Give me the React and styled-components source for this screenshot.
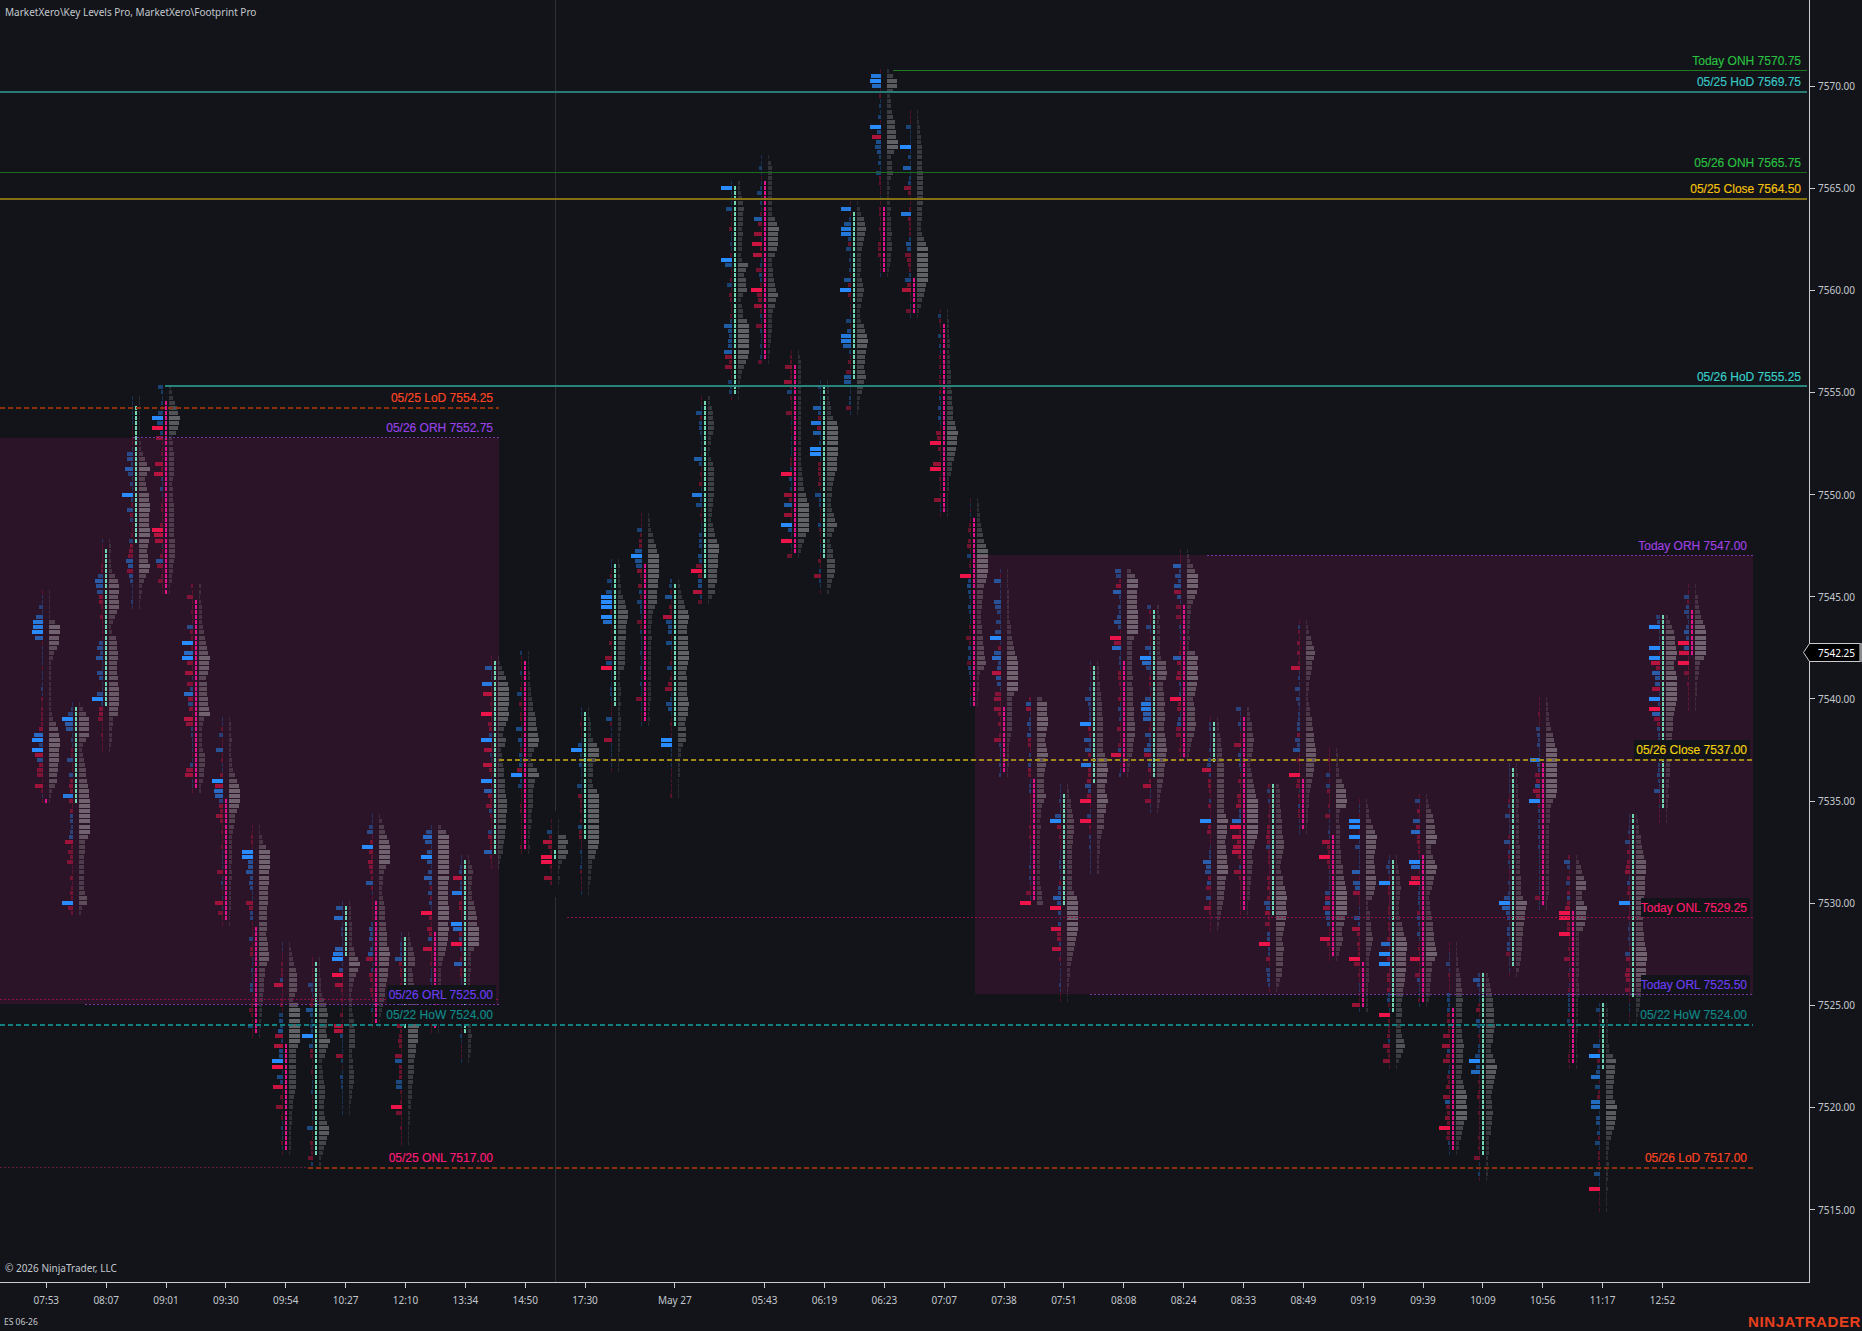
import React from "react";
import styled, { createGlobalStyle } from "styled-components";

const GlobalStyle = createGlobalStyle`
  html, body {
    margin: 0;
    padding: 0;
    background: #12141a;
  }
`;

const Page = styled.div`
  width: 1862px;
  height: 1331px;
  display: flex;
  flex-direction: column;
  overflow: hidden;
  background: #12141a;
  color: #c4c8cc;
  font-family: "Noto Sans", "Open Sans", sans-serif;
`;

const ChartRow = styled.div`
  display: flex;
  height: 1283px;
`;

const ChartPane = styled.div`
  position: relative;
  width: 1810px;
  height: 1283px;
  box-sizing: border-box;
  border-right: 1px solid #c9cbcd;
  border-bottom: 1px solid #c9cbcd;
`;

const ChartSvg = styled.svg`
  display: block;
  shape-rendering: crispEdges;
`;

const Caption = styled.div`
  position: absolute;
  left: 5px;
  top: ${(p) => p.$top}px;
  font-size: 10px;
  line-height: 14px;
  white-space: nowrap;
`;

const LevelText = styled.text`
  font-family: "Liberation Sans", Arial, sans-serif;
  font-size: 12px;
  text-anchor: end;
  dominant-baseline: central;
  fill: ${(p) => p.$color};
  stroke: ${(p) => p.$color};
  stroke-width: 0.15px;
  shape-rendering: auto;
`;

const PriceAxis = styled.div`
  position: relative;
  flex: 1;
  padding-top: 35px;
  display: flex;
  flex-direction: column;
`;

const PriceRow = styled.div`
  height: 102.15px;
  flex: none;
  display: flex;
  align-items: center;
  gap: 3px;
  font-size: 10px;
  &::before {
    content: "";
    width: 5px;
    height: 1px;
    background: #c9cbcd;
  }
`;

const LastPrice = styled.div`
  position: absolute;
  left: -7px;
  top: 643px;
  width: 59px;
  height: 19px;
  display: flex;
  align-items: center;
  justify-content: flex-end;
  padding-right: 7px;
  box-sizing: border-box;
  font-size: 10px;
  color: #fff;
  & > svg {
    position: absolute;
    left: 0;
    top: 0;
  }
  & > span {
    position: relative;
  }
`;

const TimeAxis = styled.div`
  display: flex;
  height: 28px;
  padding-left: 16.4px;
`;

const TimeTick = styled.div`
  flex: none;
  width: 59.86px;
  margin-left: ${(p) => (p.$skip ? 29.93 : 0)}px;
  display: flex;
  flex-direction: column;
  align-items: center;
  gap: 5px;
  font-size: 10px;
  line-height: 14px;
  &::before {
    content: "";
    width: 1px;
    height: 5px;
    background: #c9cbcd;
  }
`;

const Footer = styled.div`
  height: 20px;
  display: flex;
  align-items: center;
  justify-content: space-between;
  padding: 0 1px 0 4px;
`;

const Instrument = styled.span`
  font-size: 8.5px;
`;

const Brand = styled.span`
  font-family: "Liberation Sans", Arial, sans-serif;
  font-weight: 700;
  font-size: 15px;
  letter-spacing: 0.6px;
  color: #e8401c;
`;

const X0 = 46.3;
const COL = 29.93;
const Y0 = 86;
const ROW = 5.107;
const BLUE = "rgb(40,140,255)";
const RED = "rgb(236,20,72)";

const PRICES = ["7570.00", "7565.00", "7560.00", "7555.00", "7550.00", "7545.00", "7540.00", "7535.00", "7530.00", "7525.00", "7520.00", "7515.00"];

const TIMES = [
  ["07:53"], ["08:07"], ["09:01"], ["09:30"], ["09:54"], ["10:27"], ["12:10"], ["13:34"], ["14:50"],
  ["17:30"], ["May 27", true], ["05:43", true], ["06:19"], ["06:23"], ["07:07"], ["07:38"], ["07:51"],
  ["08:08"], ["08:24"], ["08:33"], ["08:49"], ["09:19"], ["09:39"], ["10:09"], ["10:56"], ["11:17"], ["12:52"],
];

const REGIONS = [
  { x: 0, y: 438, w: 499, h: 566 },
  { x: 975, y: 555, w: 778, h: 439 },
];

// y, x from, x to, colour, stroke, dash
const LINES = [
  [70.5, 893, 1807, "#1d7a20", 1],
  [92, 0, 1807, "#2a8078", 2],
  [172, 0, 1807, "#1b6c1e", 1],
  [199, 0, 1807, "#8a7514", 2],
  [386, 165, 1807, "#2a8a80", 2],
  [408, 0, 499, "#8c3010", 2, "5 3"],
  [437.5, 133, 499, "#7c34a4", 1, "2 2"],
  [555.5, 1207, 1753, "#7c34a4", 1, "2 2"],
  [760, 499, 1753, "#a08a14", 2, "5 3"],
  [917.5, 567, 1753, "#8c1050", 1, "2 2"],
  [994.5, 1090, 1753, "#7c34a4", 1, "2 2"],
  [999.5, 0, 499, "#8c1050", 1, "2 2"],
  [1004.5, 85, 499, "#7c34a4", 1, "2 2"],
  [1025, 0, 1753, "#11807e", 2, "5 3"],
  [1167.5, 0, 310, "#6a1a3a", 1, "2 2"],
  [1168, 308, 1753, "#8c3010", 2, "5 3"],
];

// text, right edge, centre y, colour, backing box
const LABELS = [
  ["Today ONH 7570.75", 1801, 61, "#2ac040"],
  ["05/25 HoD 7569.75", 1801, 82, "#38c8c4"],
  ["05/26 ONH 7565.75", 1801, 163, "#2ac040"],
  ["05/25 Close 7564.50", 1801, 189, "#f4c20a"],
  ["05/26 HoD 7555.25", 1801, 377, "#38d0c8"],
  ["05/25 LoD 7554.25", 493, 398, "#ff4522"],
  ["05/26 ORH 7552.75", 493, 428, "#9a42e8"],
  ["Today ORH 7547.00", 1747, 546, "#a040e0"],
  ["05/26 Close 7537.00", 1747, 750, "#f2d20e", true],
  ["Today ONL 7529.25", 1747, 908, "#ff1a6e", true],
  ["Today ORL 7525.50", 1747, 985, "#6e3cf0", true],
  ["05/26 ORL 7525.00", 493, 995, "#6e3cf0", true],
  ["05/22 HoW 7524.00", 493, 1015, "#0f8a88", true],
  ["05/22 HoW 7524.00", 1747, 1015, "#0f8a88", true],
  ["05/25 ONL 7517.00", 493, 1158, "#ff1a78"],
  ["05/26 LoD 7517.00", 1747, 1158, "#ff4522"],
];

// top, bottom, body top, body bottom, direction, right profile (y:width), strong left bars (y colour width)
const COLUMNS = [
  [594, 802, 796, 801, "d", "594:1 620:1 625:11 645:10 653:5 666:2 696:2 706:2 717:3 727:8 737:11 768:9 783:8 788:4 802:1", "606b4 617b7 622b10 627b10 632b11 637b8 733b9 739b11 743b4 749b11 754r8 759b6 770r6 775r6 785r8"],
  [706, 914, 709, 806, "u", "706:2 717:9 732:11 737:8 747:3 760:5 778:8 788:9 803:11 834:11 841:6 864:5 890:5 901:9 908:3 914:1", "712b5 719b11 724b8 729b7 758b6 794b10 842r8 850r5 860r6 901b11 907r5"],
  [543, 751, 546, 704, "u", "543:1 569:2 576:6 584:11 599:9 609:11 615:6 630:2 638:7 650:9 671:8 686:9 696:11 714:9 719:4 737:3 751:1", "575b5 580b8 585b7 591b6 650b6 657b7 672b6 692b6 697b11 706b2 719r5"],
  [400, 608, 403, 541, "u", "400:1 436:1 444:2 454:4 464:8 469:11 477:6 497:10 507:11 523:10 538:11 553:8 569:11 576:7 584:4 608:1", "452b6 460b6 468b8 475b5 495b11 509b6 520b3 541b4 555r5 560b7 570r6"],
  [385, 594, 398, 592, "d", "385:1 395:3 405:7 418:11 431:9 439:3 449:5 472:5 487:3 507:5 533:5 558:6 574:3 594:1", "386b5 411b5 417b11 423b6 428r11 438r7 463r8 473r9 529r11 535r9 540r8 560b7 568r6 580r5"],
  [584, 793, 597, 790, "d", "584:1 599:2 630:4 645:8 658:11 671:9 681:7 696:8 714:11 719:5 737:2 757:6 773:5 788:2", "595r6 626b6 643b11 652b9 657b11 662r6 673r8 681r6 693b9 702b5 718r9 723r7 768r7 774r8"],
  [717, 925, 796, 922, "d", "717:1 737:3 757:2 773:5 788:11 803:11 813:7 839:3 890:2 922:1", "733b4 748b7 779b11 784r8 790b9 795b8 800b4 815r7 871r6 902r8 912r5"],
  [829, 1035, 928, 1033, "d", "829:1 842:4 852:11 880:10 900:9 921:8 936:7 956:11 966:7 992:4 1012:3 1035:1", "851b11 856b11 871b7 902r7 937b4 1010r4 1024b5"],
  [946, 1154, 1042, 1152, "d", "946:1 961:4 974:8 992:8 1000:4 1007:11 1038:11 1053:7 1084:7 1109:3 1154:1", "983r9 1014b4 1034r8 1044r9 1060b11 1065r11 1075b6 1085r10 1106r7"],
  [961, 1164, 964, 1158, "u", "961:1 992:2 1012:9 1033:7 1040:11 1045:9 1063:3 1094:6 1114:5 1130:11 1160:2", "983b5 1009b7 1034b11 1126b6 1157r5"],
  [905, 1113, 908, 959, "u", "905:1 921:3 941:3 951:5 963:11 974:7 992:2 1012:4 1043:7 1051:3 1074:5 1113:1", "910b7 917b9 948b8 953b10 958b11 973r11 983r8 1024r9 1029r9 1055r7"],
  [817, 1025, 903, 1023, "d", "817:1 834:7 844:11 862:11 870:5 890:3 915:6 941:8 956:11 987:7 1023:1", "825b4 833b6 846b11 881b7 958r7"],
  [936, 1145, 938, 1028, "u", "936:1 961:8 971:4 1024:11 1043:9 1063:6 1094:4 1135:1", "958b7 1055r7 1060b7 1080b6 1085b6 1106r11 1111r6"],
  [824, 1030, 933, 1029, "d", "824:1 834:11 870:11 890:9 915:11 946:9 961:4 1028:1", "830b6 835b9 841b7 856b11 876b8 912r11 948r9 1014b3"],
  [859, 1062, 862, 1035, "u", "859:1 870:5 890:3 931:11 946:11 951:3 992:2 1023:3 1038:4 1062:1", "876r9 891b10 922b11 927b9 943r11 963b8"],
  [660, 867, 663, 857, "u", "660:1 686:11 706:11 722:10 732:4 742:9 750:3 778:7 813:9 839:7 867:1", "667b7 682b10 693r9 713r11 739b11 749r8 764r9 779b11 790b8 805r6 830b4 851b8"],
  [651, 853, 658, 851, "d", "651:1 687:2 718:7 743:11 751:5 761:3 774:11 784:6 815:4 851:1", "652b2 694b5 728b6 774b11 784b4"],
  [823, 883, 847, 858, "u", "823:1 832:1 835:7 841:11 845:7 850:8 854:11 859:7 866:2 883:1", "831b5 836r3 841r9 856r11 861r11 877r8 882r2"],
  [710, 893, 714, 840, "u", "710:1 738:4 748:11 756:11 764:5 784:4 794:11 845:11 860:5 893:1", "748b11 784b5 825b4"],
  [562, 771, 566, 709, "u", "562:1 590:3 606:8 616:11 626:8 647:7 667:7 672:2 728:3 771:1", "580b5 590b6 596b11 602b11 607b11 616b11 621b9 657r7 662b6 668r11 719b6 738r8"],
  [516, 726, 561, 723, "d", "516:1 534:4 555:11 570:11 601:9 616:4 647:3 698:3 726:1", "529b5 550b7 555b11 560b7 565b6 601b5 621r5 698r6"],
  [583, 794, 585, 728, "u", "583:1 601:5 616:11 626:9 657:11 672:8 713:11 723:7 738:9 748:3 794:1", "585b3 595b7 616r9 621b6 641b6 667b5 687r7 703b6 738b11 744b11"],
  [396, 603, 398, 580, "u", "396:1 412:5 427:6 453:1 468:6 493:6 504:5 519:3 534:7 545:11 575:9 590:7 603:1", "412b6 458b8 493b10 504b6 565r6 570r11 590r9 601r4"],
  [185, 396, 188, 393, "u", "185:2 208:6 259:3 264:11 274:6 290:9 300:3 315:5 325:11 356:11 371:4 396:1", "188b11 208b6 259b11 264b7 284b5 325b8 351b8 356r7 366r7 381b4 391b3"],
  [157, 363, 182, 361, "d", "157:1 167:4 213:4 228:11 249:9 261:4 279:5 295:10 310:5 346:2 363:1", "167b3 194b5 219b8 233r8 245r10 254r9 269r6 291r11 305r8 325r6 361r4"],
  [350, 557, 366, 555, "d", "350:1 361:3 407:3 463:3 488:6 504:11 529:11 545:4 557:1", "366r7 381r8 391b5 412r6 473r11 493r8 504b8 514r8 524b11 539r11 555r5"],
  [384, 594, 386, 560, "u", "384:1 412:4 427:11 448:11 468:10 483:6 504:3 524:10 540:3 570:9 594:1", "386b3 407b8 422b10 432b8 448b11 453b11 493b6 575r7"],
  [206, 414, 209, 381, "u", "206:2 228:9 249:5 274:3 290:7 315:2 325:6 341:11 361:7 376:9 397:3 414:1", "208b10 223b7 228b10 233b10 249b5 279b7 290b11 320b5 335b10 341b10 346b8 371r5 376b7 381b7 407r5"],
  [69, 277, 204, 274, "d", "69:1 80:10 85:10 96:3 126:8 147:11 157:4 172:6 185:2 228:4 249:5 277:1", "75b10 80b11 85b9 126b11 137r9 147b6 172b5"],
  [110, 318, 280, 315, "d", "110:1 142:4 172:6 193:6 233:4 249:11 279:11 300:5 318:1", "126b5 147b11 168b8 188r7 213b10 254r6 279b6 291r9 310r5"],
  [309, 516, 321, 514, "d", "309:1 325:2 366:3 417:6 432:11 448:9 463:6 483:2 516:1", "315b3 335b3 442r11 463r8 468r11 498r7"],
  [498, 705, 520, 704, "d", "498:1 534:5 550:11 575:11 585:7 621:4 667:9 672:3 705:1", "555b4 575r11 636r5 662r4"],
  [569, 775, 709, 774, "d", "569:1 615:2 638:5 651:7 661:11 688:11 697:5 730:5 743:2 775:1", "580b7 601b7 606b6 611b4 622b5 632b6 636b11 651b7 657b9 672r9 693r6 698r7 707r7 739r7"],
  [697, 904, 780, 903, "d", "697:1 702:10 725:11 739:8 752:11 771:8 780:6 798:9 808:4 844:3 876:3 904:6", "775r3 895r5 902r11"],
  [788, 998, 791, 908, "u", "788:1 821:7 849:5 867:5 890:5 899:11 927:11 941:9 954:6 968:3 998:1", "814b6 820b11 900b8 906r11 928r10 948r9"],
  [665, 874, 668, 785, "u", "665:1 684:3 725:6 739:6 750:6 762:11 780:10 789:7 798:11 812:8 826:7 840:3 872:2", "697b6 724b11 739b7 749b6 764b10 785b6 800r11 814b4 820r11"],
  [569, 775, 663, 774, "d", "569:3 580:11 592:10 615:11 633:11 640:5 651:5 697:6 734:8 752:5 775:1", "570b6 576b5 591b8 622b7 637r11 642r7 647b9 743r3 754r10"],
  [605, 812, 607, 780, "u", "605:2 633:3 656:3 663:9 677:10 684:6 716:8 725:7 752:10 775:7 798:3 812:1", "606b4 627b5 647b6 656b11 662b9 668b5 697b6 702b10 708b10 713b8 719b8 734b6 749b7 754r7 785r8 799r6"],
  [553, 759, 602, 759, "d", "553:1 564:4 576:11 592:10 606:4 647:2 656:11 688:10 697:6 727:9 739:5 759:1", "566b8 576b6 586b7 591r7 606r5 616r5 656b8 697r11 732r5 737r5"],
  [720, 929, 724, 764, "u", "720:1 750:5 771:7 785:7 812:7 821:11 844:8 867:11 881:9 904:6 929:1", "764b4 769r9 821b11 860b8 872b6 886r5 897b5 906r7"],
  [707, 913, 719, 912, "d", "707:1 713:3 743:7 766:3 803:11 835:11 849:6 881:4 913:1", "708b5 745r7 821b9 826r11 836r9 847r8 851r9 872r7"],
  [785, 991, 785, 917, "u", "785:3 812:5 849:8 867:4 899:11 918:10 941:6 948:8 973:6 991:1", "789b3 845b4 902b6 922r5 943r11 968b4"],
  [624, 833, 780, 830, "d", "624:1 656:10 661:6 697:2 739:8 752:11 775:7 798:3 833:1", "626b2 668r9 688b5 697b4 739b5 749b7 775r11 785r4"],
  [752, 961, 836, 959, "d", "752:1 775:3 789:9 805:11 812:3 858:5 895:11 913:11 931:6 941:7 961:1", "775b4 785b4 816r5 841r8 856r11 892b5 906r7 938r10"],
  [803, 1012, 964, 1009, "d", "803:1 821:4 835:11 858:8 881:10 895:8 904:2 941:7 959:3 1009:2", "821b11 826b11 836b11 845b5 872b8 882b7 892r7 918b6 927r8 958r11 964r6 1004r8"],
  [859, 1068, 862, 1015, "u", "859:1 886:5 913:3 945:11 964:10 987:8 1000:6 1028:5 1046:9 1062:3 1068:1", "867b4 882b11 943b9 952b11 964b11 1014r11 1048r7 1060r7"],
  [798, 1007, 857, 1005, "d", "798:1 817:7 840:11 849:3 865:11 874:9 899:3 957:11 964:6 996:4 1007:1", "799b5 820b7 830b9 860b11 866b9 876r9 882r11 958r10 973r5"],
  [945, 1154, 1010, 1152, "d", "945:1 964:2 998:7 1028:5 1048:8 1078:5 1092:10 1115:11 1127:7 1154:1", "964b4 1035r7 1048r8 1059r7 1097r7 1127r11 1136r4"],
  [973, 1179, 974, 1157, "u", "973:2 1000:7 1028:9 1051:4 1065:11 1078:9 1097:5 1115:7 1143:3 1166:2 1179:1", "979b7 1054b5 1059b11 1071b9 1156r6"],
  [767, 975, 770, 968, "u", "767:1 817:3 895:5 904:11 931:7 959:5 975:1", "815b5 841b6 896b6 902b11 906b8 952r4"],
  [701, 908, 765, 908, "d", "701:1 725:4 739:8 752:11 794:11 803:5 830:3 890:3 908:1", "728b4 758b10 774r5 790r7 800b11 897r5"],
  [859, 1068, 912, 1066, "d", "859:1 867:4 886:11 895:5 909:11 927:8 934:3 973:3 1064:1", "861b6 867b3 882b4 912r11 918r11 933r11 958r6 1019b3"],
  [1003, 1209, 1005, 1070, "u", "1003:1 1051:3 1060:10 1097:6 1106:11 1124:9 1143:3 1209:1", "1009b4 1048b7 1054b11 1075b9 1085b5 1100b9 1106b9 1143b5 1172b6 1188r11"],
  [814, 1019, 816, 1000, "u", "814:1 830:3 865:10 895:9 922:7 941:8 952:11 973:10 987:7 998:5 1019:1", "841b5 902b11 952b5 989r5"],
  [615, 821, 617, 811, "u", "615:1 631:7 651:11 665:8 679:11 697:11 720:7 757:5 785:3 821:1", "616b4 627b11 647b11 657b11 662r9 673b8 687r8 698b11 708r11 713b8 718r6 790b6"],
  [589, 711, 612, 653, "d", "589:1 615:5 631:11 656:11 663:5 684:2 711:1", "595b5 610b5 642r11 651r10 662r11 673r5"],
];

const rowOf = (y) => Math.round((y - Y0) / ROW);
const rowY = (k) => Math.round(Y0 + k * ROW - 2);

const seeded = (seed) => () => {
  seed = (seed + 0x6d2b79f5) | 0;
  let t = Math.imul(seed ^ (seed >>> 15), 1 | seed);
  t = (t + Math.imul(t ^ (t >>> 7), 61 | t)) ^ t;
  return ((t ^ (t >>> 14)) >>> 0) / 4294967296;
};

const profileAt = (nodes, y) => {
  for (let n = 1; n < nodes.length; n++) {
    if (y <= nodes[n][0]) {
      const [y1, w1] = nodes[n - 1];
      const [y2, w2] = nodes[n];
      return w1 + ((w2 - w1) * (y - y1)) / Math.max(1, y2 - y1);
    }
  }
  return nodes[nodes.length - 1][1];
};

const Footprint = ({ index, data }) => {
  const [top, bottom, bodyTop, bodyBottom, dir, right, strong] = data;
  const x = Math.round(X0 + index * COL);
  const rnd = seeded(index * 977 + 13);
  const nodes = right.split(" ").map((s) => s.split(":").map(Number));
  const picked = {};
  strong.split(" ").forEach((s) => {
    const m = s.match(/(\d+)([br])(\d+)/);
    picked[rowOf(+m[1])] = { color: m[2] === "b" ? BLUE : RED, w: +m[3] };
  });
  const bars = [];
  let blue = dir === "u";
  for (let k = rowOf(top); k <= rowOf(bottom); k++) {
    const yc = Y0 + k * ROW;
    const y = rowY(k);
    const rw = Math.max(1, Math.min(11, Math.round(profileAt(nodes, yc) + (rnd() - 0.5) * 0.9)));
    bars.push(<rect key={`r${k}`} x={x + 3} y={y} width={rw} height={4} fill="#d8d8d8" opacity={0.11 + 0.29 * Math.pow(rw / 11, 1.5)} />);
    if (rnd() < 0.22) blue = !blue;
    const hit = picked[k];
    const lw = hit ? hit.w : Math.max(1, Math.min(5, Math.round(rnd() * (1.2 + rw * 0.38))));
    const color = hit ? hit.color : blue ? BLUE : RED;
    bars.push(<rect key={`l${k}`} x={x - 3 - lw} y={y} width={lw} height={4} fill={color} opacity={hit ? 0.3 + 0.7 * Math.pow(lw / 11, 2.5) : 0.2 + lw * 0.06} />);
    if (yc >= bodyTop && yc <= bodyBottom) {
      bars.push(<rect key={`b${k}`} x={x - 1} y={y} width={2} height={4} fill={dir === "u" ? "#72d6b2" : "#e0148c"} />);
    }
  }
  return <g>{bars}</g>;
};

const App = () => {
  return (
    <Page>
      <GlobalStyle />
      <ChartRow>
        <ChartPane>
          <ChartSvg width="1809" height="1282" viewBox="0 0 1809 1282">
            {REGIONS.map((r) => (
              <rect key={r.x} x={r.x} y={r.y} width={r.w} height={r.h} fill="#2c1428" />
            ))}
            <line x1="555.5" y1="0" x2="555.5" y2="811" stroke="#2e3036" />
            <line x1="555.5" y1="897" x2="555.5" y2="1282" stroke="#2e3036" />
            {COLUMNS.map((c, i) => (
              <Footprint key={i} index={i} data={c} />
            ))}
            {LINES.map(([y, x1, x2, color, width, dash]) => (
              <line key={`${y}-${x1}`} x1={x1} y1={y} x2={x2} y2={y} stroke={color} strokeWidth={width} strokeDasharray={dash} opacity={width === 2 && !dash ? 0.95 : 1} />
            ))}
            {LABELS.filter((l) => l[4]).map(([text, x, y]) => (
              <rect key={`${text}-${x}-bg`} x={x - (text.length > 17 ? 113 : 106)} y={y - 10} width={text.length > 17 ? 116 : 109} height={19} fill="#12141a" />
            ))}
            {LABELS.map(([text, x, y, color]) => (
              <LevelText key={`${text}-${x}`} x={x} y={y} $color={color}>
                {text}
              </LevelText>
            ))}
          </ChartSvg>
          <Caption $top={5}>MarketXero\Key Levels Pro, MarketXero\Footprint Pro</Caption>
          <Caption $top={1261}>© 2026 NinjaTrader, LLC</Caption>
        </ChartPane>
        <PriceAxis>
          {PRICES.map((p) => (
            <PriceRow key={p}>{p}</PriceRow>
          ))}
          <LastPrice>
            <svg width="59" height="19" viewBox="0 0 59 19">
              <path d="M0.5 9.5 L6.5 0.5 H57 V18.5 H6.5 Z" fill="#000" stroke="#c9cbcd" />
              <rect x="57" y="0" width="2" height="19" fill="#8a8c90" />
            </svg>
            <span>7542.25</span>
          </LastPrice>
        </PriceAxis>
      </ChartRow>
      <TimeAxis>
        {TIMES.map(([t, skip]) => (
          <TimeTick key={t} $skip={skip}>
            {t}
          </TimeTick>
        ))}
      </TimeAxis>
      <Footer>
        <Instrument>ES 06-26</Instrument>
        <Brand>NINJATRADER</Brand>
      </Footer>
    </Page>
  );
};

export default App;
